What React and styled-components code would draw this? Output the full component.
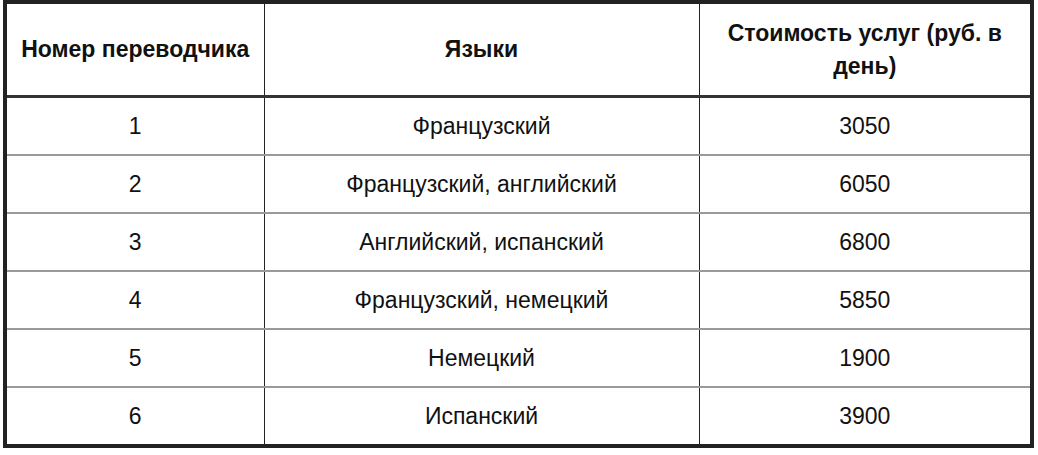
import styled, { createGlobalStyle } from 'styled-components';

const GlobalStyle = createGlobalStyle`
  html, body {
    margin: 0;
    padding: 0;
    background: #fff;
  }
`;

const Page = styled.div`
  padding: 0 4px 0 3px;
  font-family: 'Liberation Sans', Arial, sans-serif;
  color: #111;
`;

const Table = styled.table`
  width: 1031px;
  border-collapse: collapse;
  border: 4px solid #222;
  table-layout: fixed;
`;

const HeadCell = styled.th`
  height: 91px;
  padding: 0 10px;
  font-size: 23px;
  font-weight: 700;
  line-height: 33px;
  text-align: center;
  vertical-align: middle;
  border-left: 1px solid #222;
  border-bottom: 3px solid #333;
  &:first-child {
    border-left: none;
  }
`;

const Cell = styled.td`
  height: 56px;
  padding: 0 10px;
  font-size: 23px;
  text-align: center;
  vertical-align: middle;
  border-left: 1px solid #222;
  border-top: 2px solid #9a9a9a;
  &:first-child {
    border-left: none;
  }
`;

const Row = styled.tr`
  &:first-child td {
    border-top: none;
  }
`;

const rows = [
  ['1', 'Французский', '3050'],
  ['2', 'Французский, английский', '6050'],
  ['3', 'Английский, испанский', '6800'],
  ['4', 'Французский, немецкий', '5850'],
  ['5', 'Немецкий', '1900'],
  ['6', 'Испанский', '3900'],
];

export default function App() {
  return (
    <Page>
      <GlobalStyle />
      <Table>
        <colgroup>
          <col style={{ width: 259 }} />
          <col style={{ width: 435 }} />
          <col />
        </colgroup>
        <thead>
          <tr>
            <HeadCell>Номер переводчика</HeadCell>
            <HeadCell>Языки</HeadCell>
            <HeadCell>Стоимость услуг (руб. в день)</HeadCell>
          </tr>
        </thead>
        <tbody>
          {rows.map((r) => (
            <Row key={r[0]}>
              {r.map((v, i) => (
                <Cell key={i}>{v}</Cell>
              ))}
            </Row>
          ))}
        </tbody>
      </Table>
    </Page>
  );
}
